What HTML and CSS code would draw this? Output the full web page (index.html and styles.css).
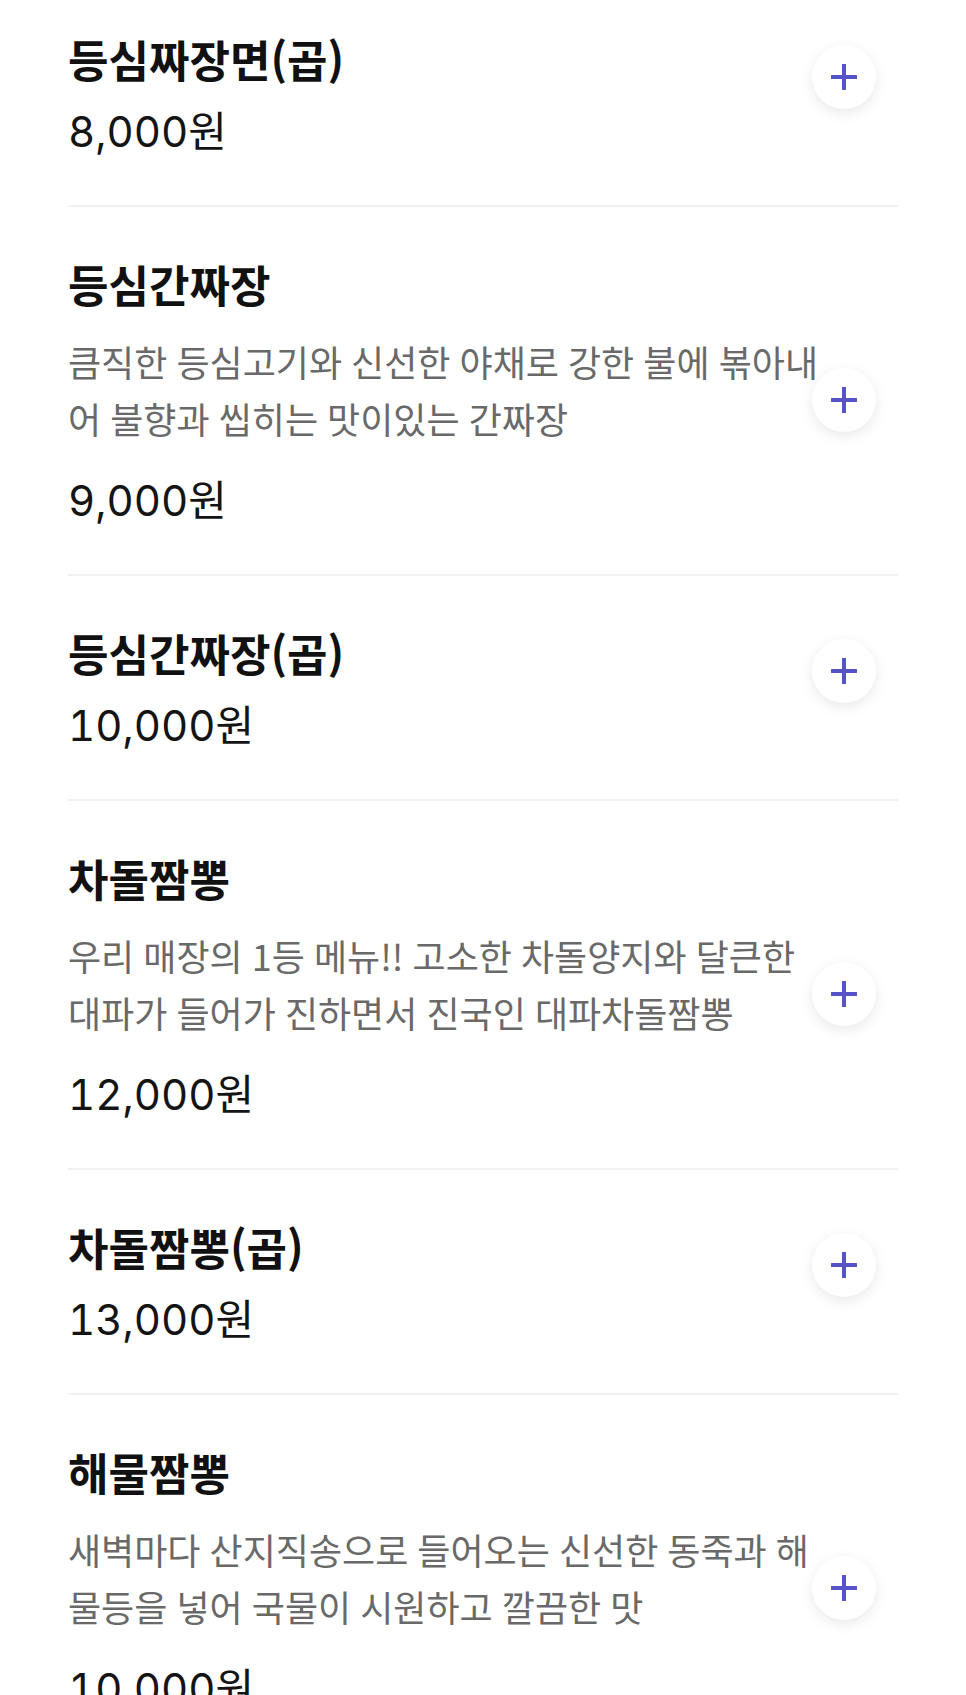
FILE: index.html
```html
<!DOCTYPE html>
<html lang="ko">
<head>
<meta charset="utf-8">
<title>메뉴</title>
<link rel="stylesheet" href="styles.css">
</head>
<body>
<ul class="menu">
  <li class="item">
    <div class="info">
      <div class="name">등심짜장면(곱)</div>
      <div class="price">8,000원</div>
    </div>
    <button class="add" type="button" aria-label="담기"><svg viewBox="0 0 26 26" width="26" height="26"><path d="M13 1V25M1 13H25" /></svg></button>
  </li>
  <li class="item has-desc">
    <div class="info">
      <div class="name">등심간짜장</div>
      <p class="desc">큼직한 등심고기와 신선한 야채로 강한 불에 볶아내어 불향과 씹히는 맛이있는 간짜장</p>
      <div class="price">9,000원</div>
    </div>
    <button class="add" type="button" aria-label="담기"><svg viewBox="0 0 26 26" width="26" height="26"><path d="M13 1V25M1 13H25" /></svg></button>
  </li>
  <li class="item">
    <div class="info">
      <div class="name">등심간짜장(곱)</div>
      <div class="price">10,000원</div>
    </div>
    <button class="add" type="button" aria-label="담기"><svg viewBox="0 0 26 26" width="26" height="26"><path d="M13 1V25M1 13H25" /></svg></button>
  </li>
  <li class="item has-desc">
    <div class="info">
      <div class="name">차돌짬뽕</div>
      <p class="desc">우리 매장의 1등 메뉴!! 고소한 차돌양지와 달큰한 대파가 들어가 진하면서 진국인 대파차돌짬뽕</p>
      <div class="price">12,000원</div>
    </div>
    <button class="add" type="button" aria-label="담기"><svg viewBox="0 0 26 26" width="26" height="26"><path d="M13 1V25M1 13H25" /></svg></button>
  </li>
  <li class="item">
    <div class="info">
      <div class="name">차돌짬뽕(곱)</div>
      <div class="price">13,000원</div>
    </div>
    <button class="add" type="button" aria-label="담기"><svg viewBox="0 0 26 26" width="26" height="26"><path d="M13 1V25M1 13H25" /></svg></button>
  </li>
  <li class="item has-desc">
    <div class="info">
      <div class="name">해물짬뽕</div>
      <p class="desc">새벽마다 산지직송으로 들어오는 신선한 동죽과 해물등을 넣어 국물이 시원하고 깔끔한 맛</p>
      <div class="price">10,000원</div>
    </div>
    <button class="add" type="button" aria-label="담기"><svg viewBox="0 0 26 26" width="26" height="26"><path d="M13 1V25M1 13H25" /></svg></button>
  </li>
</ul>
</body>
</html>
```
FILE: styles.css
```css
html, body {
  margin: 0;
  padding: 0;
  background: #ffffff;
}

body {
  font-family: "Inter", "Noto Sans CJK KR", sans-serif;
  color: #111111;
  overflow: hidden;
}

.menu {
  list-style: none;
  margin: -18px 0 0;
  padding: 0 68px;
}

.item {
  display: flex;
  align-items: flex-start;
  padding: 51px 0 47px;
  border-bottom: 2px solid #f1f1f1;
}

.info {
  flex: 1;
  min-width: 0;
}

.name {
  font-family: "Noto Sans CJK KR", sans-serif;
  font-weight: 700;
  font-size: 44px;
  line-height: 52px;
  color: #111111;
}

.desc {
  margin: 23px 0 0;
  font-family: "Noto Sans CJK KR", sans-serif;
  font-size: 36px;
  line-height: 57px;
  word-spacing: -1px;
  color: #696969;
  word-break: break-all;
}

.price {
  margin-top: 21px;
  font-size: 42px;
  line-height: 52px;
  font-weight: 400;
  font-variant-numeric: tabular-nums;
  color: #141414;
}

.desc + .price {
  margin-top: 28px;
}

.add {
  flex: none;
  width: 64px;
  height: 64px;
  margin: 12px 22px 0 -14px;
  padding: 0;
  border: none;
  border-radius: 50%;
  background: #ffffff;
  box-shadow: 0 4px 14px rgba(0, 0, 0, 0.09);
  display: flex;
  align-items: center;
  justify-content: center;
}

.has-desc .add {
  margin-top: 110px;
}

.add svg {
  display: block;
}

.add path {
  stroke: #5652c8;
  stroke-width: 4;
  stroke-linecap: round;
  fill: none;
}
```
